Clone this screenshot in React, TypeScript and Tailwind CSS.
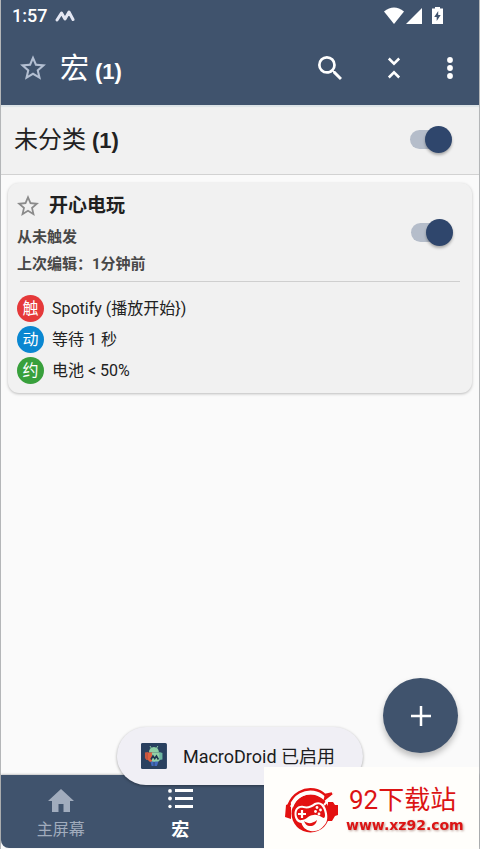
import { useState } from "react";

// favourite star, outline only
function StarIcon({ className }: { className: string }) {
  return (
    <svg viewBox="2 2 20 19" fill="currentColor" className={className} aria-hidden="true">
      <path d="M22 9.24l-7.19-.62L12 2 9.19 8.63 2 9.24l5.46 4.73L5.82 21 12 17.27 18.18 21l-1.63-7.03L22 9.24zM12 15.4l-3.76 2.27 1-4.28-3.32-2.88 4.38-.38L12 6.1l1.71 4.04 4.38.38-3.32 2.88 1 4.28L12 15.4z" />
    </svg>
  );
}

function Switch({ label }: { label: string }) {
  const [on, setOn] = useState(true);

  return (
    <label className="relative flex h-[27px] w-[42px] shrink-0 cursor-pointer items-center">
      <input
        type="checkbox"
        role="switch"
        aria-label={label}
        checked={on}
        onChange={() => setOn(!on)}
        className="peer absolute inset-0 opacity-0"
      />
      <span className="h-[19px] w-[38px] rounded-full bg-[#b5bdca]" />
      <span className="absolute left-0 size-[27px] rounded-full bg-[#2f466c] shadow-[0_2px_3px_rgba(0,0,0,0.3)] peer-checked:left-[15px]" />
    </label>
  );
}

function StatusBar() {
  return (
    <div className="flex h-8 items-center pr-[35px] pl-[11px]">
      <span className="text-[18px] leading-8 font-medium">1:57</span>
      <svg viewBox="0 0 20 12" className="ml-2 h-3 w-5" fill="none" stroke="#e4e7f3" strokeWidth="3" strokeLinecap="round" strokeLinejoin="round" aria-hidden="true">
        <path d="M2 10L6.5 3l3.5 6 4-7 4 7.500" />
      </svg>
      <svg viewBox="0 0 60 18" className="ml-auto h-[18px] w-[60px]" fill="#fff" aria-hidden="true">
        <path d="M0 4.500Q10-3.500 20 4.500L10 17z" />
        <path d="M38 1v16H22z" />
        <path fillRule="evenodd" d="M51 0h5v1.500h3V17H48V1.500h3zM54.200 4l-4 6h2.500v4l4-6h-2.500z" />
      </svg>
    </div>
  );
}

function Header() {
  return (
    <header className="bg-[#40536d] text-white">
      <StatusBar />
      <div className="flex h-[73px] items-center pr-[17px] pb-[2px] pl-[19px]">
        <button type="button" aria-label="收藏">
          <StarIcon className="h-[25px] w-[26px] text-[#b3bfd2]" />
        </button>
        <h1 className="ml-[14px] flex items-baseline gap-[6px] pt-[5px] text-[29px] leading-10">
          宏 <span className="font-['Liberation_Sans'] text-[22px] font-bold">(1)</span>
        </h1>
        <button type="button" aria-label="搜索" className="ml-auto">
          <svg viewBox="3 3 17.500 17.500" className="size-6" fill="currentColor">
            <path d="M15.500 14h-.79l-.28-.27A6.470 6.470 0 0 0 16 9.500 6.500 6.500 0 1 0 9.500 16c1.610 0 3.090-.59 4.230-1.570l.27.28v.79l5 4.990L20.490 19l-4.990-5zm-6 0C7.010 14 5 11.990 5 9.500S7.010 5 9.500 5 14 7.010 14 9.500 11.990 14 9.500 14z" />
          </svg>
        </button>
        <button type="button" aria-label="全部折叠" className="ml-[45px]">
          <svg viewBox="0 0 14 22" className="h-[22px] w-[14px]" fill="none" stroke="currentColor" strokeWidth="2.500">
            <path d="M1.800 1.500L7 6.700l5.200-5.200M1.800 20.500L7 15.300l5.200 5.200" />
          </svg>
        </button>
        <button type="button" aria-label="更多" className="ml-[37px] flex w-6 justify-center">
          <svg viewBox="0 0 6 22" className="h-[22px] w-[6px]" fill="currentColor">
            <circle cx="3" cy="3" r="2.900" />
            <circle cx="3" cy="11" r="2.900" />
            <circle cx="3" cy="19" r="2.900" />
          </svg>
        </button>
      </div>
    </header>
  );
}

const steps = [
  { badge: "触", color: "bg-[#e5393a]", text: "Spotify (播放开始})" },
  { badge: "动", color: "bg-[#0a87d1]", text: "等待 1 秒" },
  { badge: "约", color: "bg-[#38a03c]", text: "电池 < 50%" },
];

function MacroCard() {
  return (
    <article className="mx-[7px] mt-2 rounded-[11px] bg-[#f1f1f1] px-[9px] pt-[9px] pb-[9px] shadow-[0_1px_3px_rgba(0,0,0,0.25)]">
      <div className="flex items-start justify-between pr-[10px]">
        <div>
          <div className="flex h-[27px] items-center gap-[10px]">
            <button type="button" aria-label="收藏">
              <StarIcon className="h-[21px] w-[22px] text-[#8b8b8b]" />
            </button>
            <h3 className="text-[19px] leading-[27px] font-bold text-[#202020]">开心电玩</h3>
          </div>
          <p className="pt-[5px] text-[15px] leading-[27px] font-bold text-[#484848]">从未触发</p>
          <p className="text-[15px] leading-[27px] font-bold text-[#484848]">上次编辑：1分钟前</p>
        </div>
        <div className="pt-[27px]">
          <Switch label="开心电玩" />
        </div>
      </div>
      <hr className="mx-[3px] mt-[3px] border-[#cfcfcf]" />
      <ul className="mt-[13px] flex flex-col gap-[4px]">
        {steps.map((s) => (
          <li key={s.badge} className="flex items-center gap-2 text-[16px] leading-[27px] text-[#222]">
            <span className={`flex size-[27px] items-center justify-center rounded-full text-white ${s.color}`}>
              {s.badge}
            </span>
            {s.text}
          </li>
        ))}
      </ul>
    </article>
  );
}

function BottomNav() {
  return (
    <nav className="grid h-[73px] grid-cols-4 rounded-bl-lg bg-[#40536d] shadow-[0_-1px_2px_rgba(0,0,0,0.2)]">
      <a href="#home" className="flex flex-col items-center pt-[14px] text-[#a1acbd]">
        <svg viewBox="0 0 26 23" className="h-[23px] w-[26px]" fill="currentColor" aria-hidden="true">
          <path d="M13 0L0 12h4v11h6.500v-8h5v8H22V12h4z" />
        </svg>
        <span className="mt-[6px] text-[16px] leading-6">主屏幕</span>
      </a>
      <a href="#macros" className="flex flex-col items-center pt-[14px] text-white">
        <svg viewBox="0 0 25 20" className="h-5 w-[25px]" fill="currentColor" aria-hidden="true">
          <path d="M7 0h18v3H7zM7 8h18v3H7zM7 16h18v3H7z" />
          <circle cx="2" cy="1.900" r="1.900" />
          <circle cx="2" cy="9.500" r="1.900" />
          <circle cx="2" cy="17.500" r="1.700" />
        </svg>
        <span className="mt-[9px] text-[18px] leading-6 font-bold">宏</span>
      </a>
    </nav>
  );
}

function Toast() {
  return (
    <div role="status" className="absolute bottom-[64px] left-1/2 flex h-[58px] -translate-x-1/2 items-center gap-4 rounded-full bg-[#f0eff5] pr-7 pl-6 text-[18px] whitespace-nowrap text-[#1c1c20] shadow-[0_1px_3px_rgba(0,0,0,0.35)]">
      <svg viewBox="0 0 26 26" className="size-[26px] shrink-0" aria-hidden="true">
        <rect width="26" height="26" rx="1.500" fill="#29405f" />
        <path d="M9 3l2 3M17 3l-2 3" stroke="#8fcfa5" strokeWidth="1" />
        <path d="M8 9.500a5 5.500 0 0 1 10 0z" fill="#8fcfa5" />
        <path d="M7 9.500h6V19H9l-2-2z" fill="#e0603f" />
        <path d="M7 9v8H5.500L4 15v-5.500z" fill="#c9573f" />
        <path d="M11 9.500h8V17l-2 2h-6z" fill="#92d0a6" />
        <path d="M18.500 9l3 1v6.500l-3 .5z" fill="#6cb5a0" />
        <path d="M9.500 18.500h3.200V23h-2zM13.500 18.500h4L16 23h-2.500z" fill="#4169bd" />
        <path d="M10 16.500l2-3.500 1.800 2.500 1.700-2.500 2 3.500" fill="none" stroke="#1f3650" strokeWidth="1.600" />
      </svg>
      <span>MacroDroid 已启用</span>
    </div>
  );
}

function SiteBadge() {
  return (
    <a href="#site" className="absolute right-0 bottom-0 flex h-[82px] w-[215px] items-center bg-[#fffefb] pl-[21px] text-[#dc1414]">
      <svg viewBox="0 0 54 46" className="mt-[6px] h-[46px] w-[54px] shrink-0" aria-hidden="true">
        <path d="M6 15L1 17 0 29l6 2zM43 14h5l2 3h3v10l-3 1-3 5h-5z" fill="#e31111" />
        <circle cx="25.500" cy="25.500" r="19" fill="#e31111" />
        {/* headband with the gap under it */}
        <path d="M6.500 19C11 7 22 2.500 32 5.500l7 3.500" fill="none" stroke="#fffefb" strokeWidth="3.200" />
        <path d="M3.500 17C8 5 19 0 29 1.500c5 .8 8 2.500 11 5.500l7-1.500" fill="none" stroke="#e31111" strokeWidth="2.400" />
        <path d="M49 6L39 17" stroke="#fffefb" strokeWidth="2" />
        <path d="M48.500 5.500L38 14l1.500-6z" fill="#e31111" />
        {/* gamepad mask */}
        <path d="M9.500 26c0-6 4-9 9-8 4 1 7 0 11-3 5-2 9 0 11 5 3 8 2 14-1 17-4 5-8 7-14 6-5-1-8-4-9-8-4 0-7-4-7-9z" fill="#fffefb" />
        <path d="M11.500 26c0-5 3-7 7-6 4 1 8 0 12-3 4-2 6 0 8 4 2 5 2 9 0 9-3-1-5-4-10-3-5 0-7 5-12 5-3 1-5-3-5-6z" fill="#e31111" />
        <path d="M17 22v8M13 26h8" stroke="#fffefb" strokeWidth="2.200" />
        <g fill="#fffefb">
          <circle cx="32" cy="19.500" r="1.400" />
          <circle cx="35.500" cy="22" r="1.400" />
          <circle cx="30.500" cy="23.500" r="1.400" />
          <circle cx="34" cy="26" r="1.400" />
        </g>
        <path d="M19 33c4 3 8 3 13-1-1 4-3 6-7 6-3 0-5-2-6-5z" fill="#e31111" />
      </svg>
      <span className="ml-[7px] flex flex-col">
        <span className="ml-[3px] text-[26px] leading-[34px]">92下载站</span>
        <span className="font-['DejaVu_Sans'] text-[14px] leading-4 font-bold drop-shadow-[1px_1px_1px_rgba(120,60,50,0.5)]">
          www.xz92.com
        </span>
      </span>
    </a>
  );
}

export default function App() {
  return (
    <div className="relative flex min-h-screen flex-col border-x border-[#b4b6b8] bg-[#fafafa] pb-px font-[Roboto,'Noto_Sans_CJK_SC',sans-serif]">
      <Header />
      <main className="flex-1">
        <section className="flex h-[70px] items-center justify-between border-b border-[#d2d2d2] bg-[#f1f1f1] pr-[27px] pl-[13px] shadow-[inset_0_2px_1px_#dce3e6]">
          <h2 className="pt-[2px] text-[24px] leading-8 text-[#222]">
            未分类 <span className="font-['Liberation_Sans'] text-[22px] font-bold">(1)</span>
          </h2>
          <Switch label="未分类" />
        </section>
        <MacroCard />
      </main>
      <button type="button" aria-label="添加宏" className="absolute right-[21px] bottom-[96px] flex size-[75px] items-center justify-center rounded-full bg-[#40536d] text-white shadow-[0_4px_6px_rgba(0,0,0,0.25)]">
        <svg viewBox="0 0 20 20" className="size-5" stroke="currentColor" strokeWidth="2.500" aria-hidden="true">
          <path d="M10 0v20M0 10h20" />
        </svg>
      </button>
      <BottomNav />
      <Toast />
      <SiteBadge />
    </div>
  );
}
